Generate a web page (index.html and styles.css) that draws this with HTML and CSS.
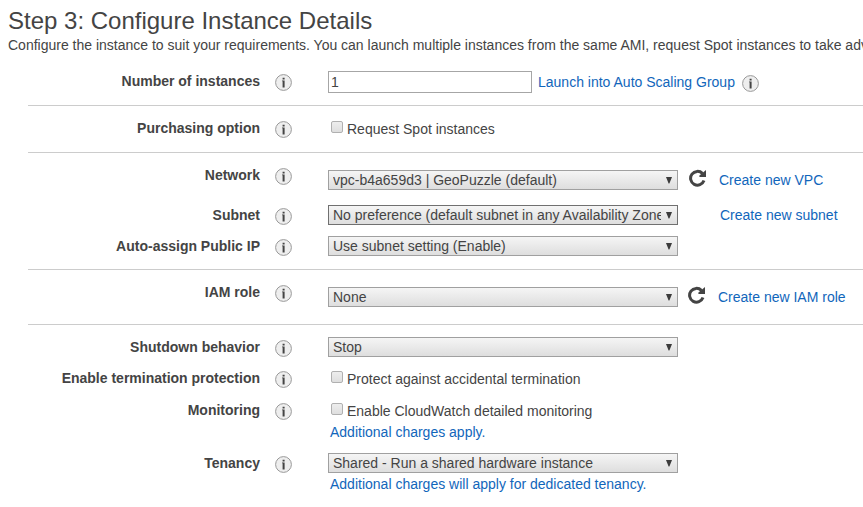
FILE: index.html
```
<!DOCTYPE html>
<html lang="en">
<head>
<meta charset="utf-8">
<title>Step 3: Configure Instance Details</title>
<link rel="stylesheet" href="styles.css">
</head>
<body>
<svg class="defs" aria-hidden="true">
  <symbol id="info" viewBox="0 0 17 17">
    <circle cx="8.5" cy="8.5" r="7.9" fill="#eee" stroke="#999" stroke-width="1"/>
    <path d="M7.6 3.7h2v1.7h-2zM7 6.5h2.6v7H7.6V7.3H7z" fill="#444"/>
  </symbol>
  <symbol id="refresh" viewBox="0 0 18 18">
    <path d="M13.4 4.4A6.9 6.9 0 1 0 15 11.6" fill="none" stroke="#444" stroke-width="3"/>
    <path d="M17 1v7H10.4V6.6z" fill="#444"/>
  </symbol>
  <symbol id="arrow" viewBox="0 0 6 8">
    <path d="M0 1h6L3.4 7.4h-.8z" fill="#3c3c3c"/>
  </symbol>
</svg>
<header>
  <h1>Step 3: Configure Instance Details</h1>
  <p class="intro">Configure the instance to suit your requirements. You can launch multiple instances from the same AMI, request Spot instances to take adv</p>
</header>
<form>
  <section class="group first">
    <div class="row">
      <label class="name">Number of instances</label>
      <svg class="info"><use href="#info"/></svg>
      <div class="field"><input class="number" type="text" value="1"><a class="after-input">Launch into Auto Scaling Group</a><svg class="info trailing"><use href="#info"/></svg></div>
    </div>
  </section>
  <section class="group purchasing">
    <div class="row">
      <label class="name">Purchasing option</label>
      <svg class="info"><use href="#info"/></svg>
      <label class="field check"><input type="checkbox"><span>Request Spot instances</span></label>
    </div>
  </section>
  <section class="group network">
    <div class="row tall">
      <label class="name">Network</label>
      <svg class="info"><use href="#info"/></svg>
      <div class="field low"><div class="select"><select><option>vpc-b4a659d3 | GeoPuzzle (default)</option></select><svg><use href="#arrow"/></svg></div><svg class="refresh"><use href="#refresh"/></svg><a class="create">Create new VPC</a></div>
    </div>
    <div class="row">
      <label class="name">Subnet</label>
      <svg class="info"><use href="#info"/></svg>
      <div class="field"><div class="select active"><select><option>No preference (default subnet in any Availability Zone)</option></select><svg><use href="#arrow"/></svg></div><a class="create alone">Create new subnet</a></div>
    </div>
    <div class="row">
      <label class="name">Auto-assign Public IP</label>
      <svg class="info"><use href="#info"/></svg>
      <div class="field"><div class="select"><select><option>Use subnet setting (Enable)</option></select><svg><use href="#arrow"/></svg></div></div>
    </div>
  </section>
  <section class="group role">
    <div class="row">
      <label class="name">IAM role</label>
      <svg class="info"><use href="#info"/></svg>
      <div class="field low"><div class="select"><select><option>None</option></select><svg><use href="#arrow"/></svg></div><svg class="refresh near"><use href="#refresh"/></svg><a class="create">Create new IAM role</a></div>
    </div>
  </section>
  <section class="group last">
    <div class="row">
      <label class="name">Shutdown behavior</label>
      <svg class="info"><use href="#info"/></svg>
      <div class="field"><div class="select"><select><option>Stop</option></select><svg><use href="#arrow"/></svg></div></div>
    </div>
    <div class="row protection">
      <label class="name">Enable termination protection</label>
      <svg class="info"><use href="#info"/></svg>
      <label class="field check"><input type="checkbox"><span>Protect against accidental termination</span></label>
    </div>
    <div class="row monitoring">
      <label class="name">Monitoring</label>
      <svg class="info"><use href="#info"/></svg>
      <div class="stack">
        <label class="field check"><input type="checkbox"><span>Enable CloudWatch detailed monitoring</span></label>
        <a class="note">Additional charges apply.</a>
      </div>
    </div>
    <div class="row">
      <label class="name">Tenancy</label>
      <svg class="info"><use href="#info"/></svg>
      <div class="stack">
        <div class="field"><div class="select"><select><option>Shared - Run a shared hardware instance</option></select><svg><use href="#arrow"/></svg></div></div>
        <a class="note">Additional charges will apply for dedicated tenancy.</a>
      </div>
    </div>
  </section>
</form>
</body>
</html>
```
FILE: styles.css
```
* { box-sizing: border-box; }
body {
  margin: 0;
  background: #fff;
  color: #444;
  font: 14px/20px "Liberation Sans", Arial, sans-serif;
  overflow: hidden;
}
.defs { display: none; }
header {
  height: 71px;
  padding: 7px 0 0 8px;
  white-space: nowrap;
}
h1 {
  margin: 0;
  font-size: 24px;
  line-height: 28px;
  font-weight: normal;
}
.intro { margin: 0; }
.group {
  margin-left: 28px;
  padding-top: 12px;
  border-bottom: 1px solid #ccc;
}
.first { height: 35px; padding-top: 0; }
.purchasing { height: 47px; }
.network { height: 117px; }
.role { height: 55px; }
.last { border: 0; }
.row {
  display: grid;
  grid-template-columns: 232px 68px 1fr;
  align-items: start;
  min-height: 31px;
  white-space: nowrap;
}
.row > .info { margin: 3px 0 0 15px; }
.tall { min-height: 40px; }
.protection { min-height: 32px; }
.monitoring { min-height: 53px; }
.name {
  text-align: right;
  font-weight: bold;
}
.info { width: 17px; height: 17px; flex: none; }
.field {
  display: flex;
  align-items: flex-start;
}
.low { padding-top: 5px; }
.number {
  width: 204px;
  height: 22px;
  padding: 0 2px;
  border: 1px solid #a6a6a6;
  color: #444;
  font: inherit;
}
.after-input { margin: 1px 0 0 6px; }
.trailing { margin: 4px 0 0 7px; }
a { color: #1166bb; }
.check span { margin: 1px 0 0 4px; }
.check input {
  appearance: none;
  width: 12px;
  height: 12px;
  margin: 3px 0 0 3px;
  border: 1px solid #b0b0b0;
  border-radius: 2px;
  background: linear-gradient(#ededed, #dedede);
}
.select { position: relative; width: 350px; height: 20px; }
select {
  appearance: none;
  display: block;
  width: 350px;
  height: 20px;
  margin: 0;
  padding: 0 16px 0 4px;
  border: 1px solid #a0a0a0;
  border-radius: 0;
  background: linear-gradient(#f5f5f5, #dedede);
  color: #444;
  font: inherit;
  line-height: 18px;
}
.active select { border-color: #707070; }
.select svg {
  position: absolute;
  top: 6px;
  right: 6px;
  width: 6px;
  height: 8px;
}
.refresh {
  width: 18px;
  height: 18px;
  margin: -1px 0 0 11px;
}
.near { margin-left: 10px; }
.create { margin-left: 12px; }
.alone { margin-left: 42px; }
.note { display: block; margin: 1px 0 0 2px; }
```
